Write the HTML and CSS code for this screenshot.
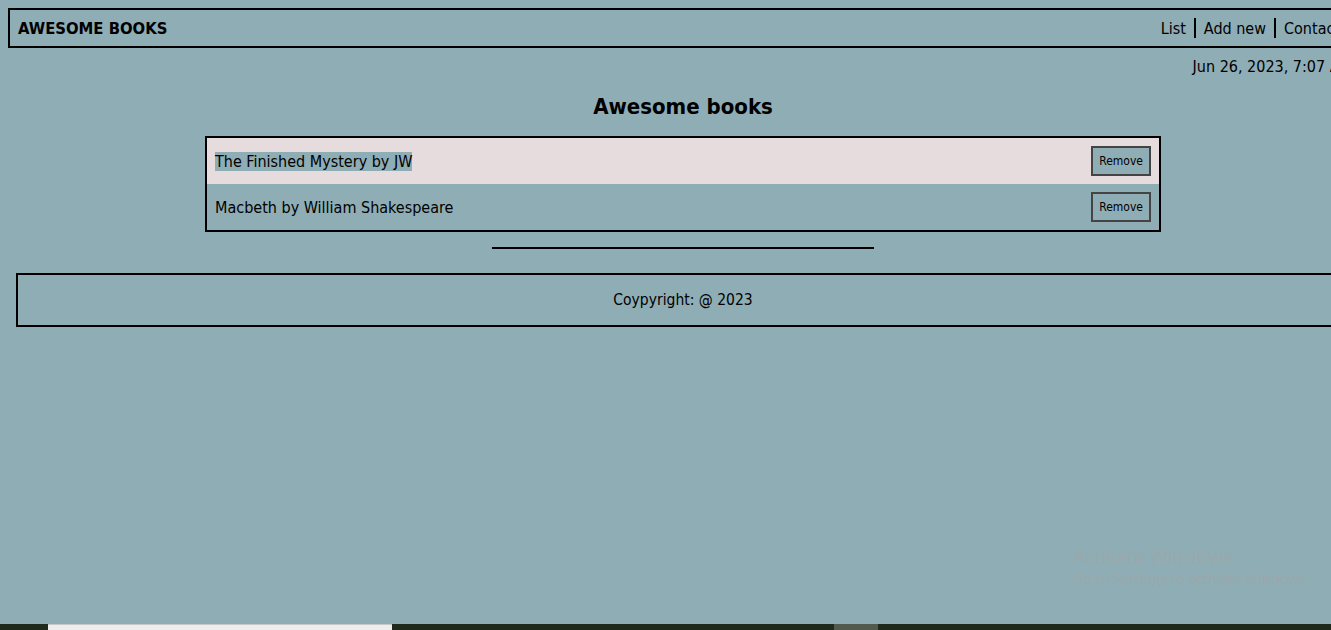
FILE: index.html
```html
<!DOCTYPE html>
<html lang="en">
<head>
<meta charset="utf-8">
<title>Awesome Books</title>
<link rel="stylesheet" href="styles.css">
</head>
<body>
<div class="page">
  <header class="topbar">
    <div class="brand">AWESOME BOOKS</div>
    <nav class="nav">
      <a class="nav-link" href="#">List</a>
      <span class="sep"></span>
      <a class="nav-link" href="#">Add new</a>
      <span class="sep"></span>
      <a class="nav-link" href="#">Contact</a>
    </nav>
  </header>
  <div class="date">Jun 26, 2023, 7:07 AM</div>
  <h1 class="title">Awesome books</h1>
  <ul class="books">
    <li class="book odd"><span class="book-name selected">The Finished Mystery by JW</span><button class="remove">Remove</button></li>
    <li class="book"><span class="book-name">Macbeth by William Shakespeare</span><button class="remove">Remove</button></li>
  </ul>
  <hr class="rule">
  <footer class="footer">Coypyright: @ 2023</footer>
</div>
<div class="watermark">
  <div class="wm-title">Activate Windows</div>
  <div class="wm-sub">Go to Settings to activate Windows.</div>
</div>
<div class="taskbar">
  <div class="tb-white"></div>
  <div class="tb-grey"></div>
</div>
</body>
</html>
```
FILE: styles.css
```css
html, body {
  overflow: hidden;
}
body {
  margin: 0;
  background: #8fadb5;
  font-family: "DejaVu Sans Condensed", "DejaVu Sans", sans-serif;
  color: #000;
  height: 630px;
  position: relative;
}
.page {
  width: 1350px;
  padding: 8px 0 0 8px;
}
.topbar {
  display: flex;
  justify-content: space-between;
  align-items: center;
  border: 2px solid #000;
  height: 36px;
  padding: 0 16px 0 8px;
}
.brand {
  font-size: 16.5px;
  font-weight: bold;
}
.nav {
  display: flex;
  align-items: center;
  gap: 8px;
}
.nav-link {
  color: #000;
  text-decoration: none;
  font-size: 16px;
}
.sep {
  width: 2px;
  height: 20px;
  background: #000;
}
.date {
  text-align: right;
  font-size: 16px;
  padding: 9px 6px 0 0;
  height: 21px;
}
.title {
  text-align: center;
  font-size: 22px;
  font-weight: bold;
  margin: 16px 0 17px;
}
.books {
  list-style: none;
  margin: 0 auto;
  padding: 0;
  width: 952px;
  border: 2px solid #000;
}
.book {
  display: flex;
  justify-content: space-between;
  align-items: center;
  height: 46px;
  padding: 0 8px;
  font-size: 16px;
}
.book.odd {
  background: #e6dcdd;
}
.selected {
  background: #8fadb5;
}
.remove {
  font-family: inherit;
  font-size: 12px;
  background: #8fadb5;
  border: 2px solid #444;
  height: 30px;
  padding: 0 6px;
  color: #000;
}
.rule {
  width: 382px;
  margin: 15px auto 24px;
  border: 0;
  border-top: 2px solid #000;
  height: 0;
}
.footer {
  margin: 0 8px;
  border: 2px solid #000;
  height: 50px;
  display: flex;
  align-items: center;
  justify-content: center;
  font-size: 15.5px;
}
.watermark {
  position: absolute;
  left: 1073px;
  top: 545px;
  color: #9ba8ab;
  font-family: "Open Sans", sans-serif;
}
.wm-title {
  font-size: 19.5px;
  line-height: 24px;
}
.wm-sub {
  font-size: 14.5px;
  line-height: 20px;
}
.taskbar {
  position: absolute;
  left: 0;
  right: 0;
  bottom: 0;
  height: 6px;
  background: #1f2a1c;
}
.tb-white {
  position: absolute;
  left: 48px;
  width: 344px;
  top: 0;
  bottom: 0;
  background: #eeeeee;
  border-top: 1px solid #c8c8c8;
}
.tb-grey {
  position: absolute;
  left: 834px;
  width: 44px;
  top: 0;
  bottom: 0;
  background: #525a4e;
}
```
